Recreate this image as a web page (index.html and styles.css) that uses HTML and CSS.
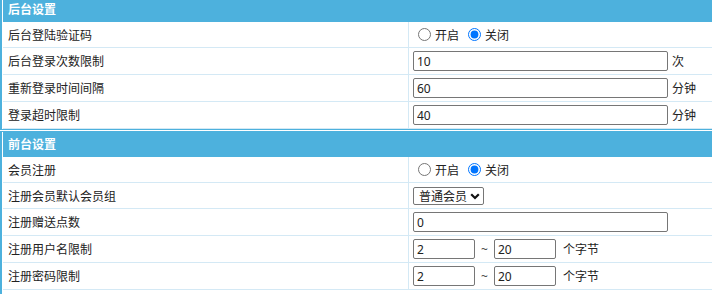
FILE: index.html
```html
<!DOCTYPE html>
<html lang="zh-CN">
  <head>
    <meta charset="UTF-8" />
    <meta name="viewport" content="width=device-width, initial-scale=1.0" />
    <title>系统设置</title>
    <link rel="stylesheet" href="styles.css">
  </head>
  <body>
    <div class="panel first">
      <div class="panel-head">后台设置</div>
      <div class="row short">
        <div class="label">后台登陆验证码</div>
        <div class="field">
          <label class="opt"><input type="radio" name="admin_code" value="1"><span>开启</span></label>
          <label class="opt"><input type="radio" name="admin_code" value="0" checked><span>关闭</span></label>
        </div>
      </div>
      <div class="row">
        <div class="label">后台登录次数限制</div>
        <div class="field">
          <input class="text" type="text" value="10">
          <span class="unit">次</span>
        </div>
      </div>
      <div class="row">
        <div class="label">重新登录时间间隔</div>
        <div class="field">
          <input class="text" type="text" value="60">
          <span class="unit">分钟</span>
        </div>
      </div>
      <div class="row">
        <div class="label">登录超时限制</div>
        <div class="field">
          <input class="text" type="text" value="40">
          <span class="unit">分钟</span>
        </div>
      </div>
    </div>

    <div class="panel last">
      <div class="panel-head">前台设置</div>
      <div class="row short">
        <div class="label">会员注册</div>
        <div class="field">
          <label class="opt"><input type="radio" name="reg" value="1"><span>开启</span></label>
          <label class="opt"><input type="radio" name="reg" value="0" checked><span>关闭</span></label>
        </div>
      </div>
      <div class="row short">
        <div class="label">注册会员默认会员组</div>
        <div class="field">
          <span class="select-wrap">
            <select class="select">
              <option>普通会员</option>
              <option>VIP会员</option>
            </select>
            <svg class="chevron" width="10" height="7" viewBox="0 0 10 7">
              <polyline points="1.2,1.2 5,5 8.8,1.2" fill="none" stroke="#111" stroke-width="2.2" />
            </svg>
          </span>
        </div>
      </div>
      <div class="row">
        <div class="label">注册赠送点数</div>
        <div class="field">
          <input class="text" type="text" value="0">
        </div>
      </div>
      <div class="row">
        <div class="label">注册用户名限制</div>
        <div class="field">
          <input class="text small" type="text" value="2">
          <span class="tilde">~</span>
          <input class="text small" type="text" value="20">
          <span class="unit bytes">个字节</span>
        </div>
      </div>
      <div class="row">
        <div class="label">注册密码限制</div>
        <div class="field">
          <input class="text small" type="text" value="2">
          <span class="tilde">~</span>
          <input class="text small" type="text" value="20">
          <span class="unit bytes">个字节</span>
        </div>
      </div>
    </div>
  </body>
</html>
```

FILE: styles.css
```css
body {
  margin: 0;
  padding: 0;
  background-color: #fff;
  color: #222;
  font-family: "Noto Sans", "Noto Sans CJK SC", sans-serif;
  font-size: 12px;
  overflow: hidden;
}

.panel {
  border-top: 1px solid #4db1dd;
  border-bottom: 1px solid #4db1dd;
  border-left: 2px solid #4db1dd;
  padding-left: 1px;
  margin-bottom: 1px;
}

.panel.first {
  margin-top: -4px;
}

/* page continues below the fold */
.panel.last {
  border-bottom: none;
  padding-bottom: 20px;
}

.panel-head {
  height: 25px;
  line-height: 25px;
  padding-left: 5px;
  background-color: #4db1dd;
  color: #fff;
  font-weight: bold;
}

.row {
  display: flex;
  height: 27px;
  box-sizing: border-box;
  border-bottom: 1px solid #d4e9f5;
}

.row.short {
  height: 26px;
}

.label {
  flex: 0 0 406px;
  box-sizing: border-box;
  padding-left: 5px;
  border-right: 1px solid #d4e9f5;
  display: flex;
  align-items: center;
}

.field {
  flex: 1;
  padding-left: 4px;
  display: flex;
  align-items: center;
  gap: 4px;
}

.opt {
  display: flex;
  align-items: center;
}

.opt input {
  width: 13px;
  height: 13px;
  margin: 0 4px 0 5px;
}

.text {
  width: 255px;
  height: 20px;
  box-sizing: border-box;
  padding: 0 3px;
  border: 1px solid #767676;
  border-radius: 2px;
  font-family: "Noto Sans", "Noto Sans CJK SC", sans-serif;
  font-size: 12px;
  color: #222;
}

.text.small {
  width: 62px;
}

.tilde {
  padding: 0 2px;
  color: #444;
}

.unit.bytes {
  margin-left: 3px;
}

.select-wrap {
  position: relative;
  display: inline-block;
}

.select {
  appearance: none;
  width: 71px;
  height: 18px;
  box-sizing: border-box;
  padding: 0 0 0 5px;
  border: 1px solid #767676;
  border-radius: 2px;
  background-color: #fff;
  font-family: "Noto Sans CJK SC", sans-serif;
  font-size: 12px;
  line-height: 16px;
  color: #222;
}

.chevron {
  position: absolute;
  right: 4px;
  top: 6px;
  pointer-events: none;
}
```
